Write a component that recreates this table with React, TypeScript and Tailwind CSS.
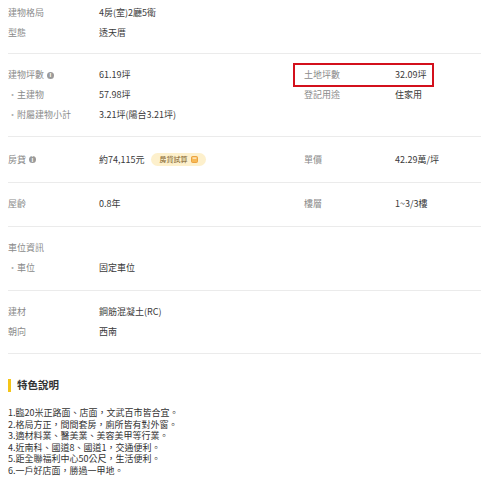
import React from 'react';

type Row = {
  label: string;
  value: React.ReactNode;
  sub?: boolean;
  info?: boolean;
  right?: { label: string; value: string; highlight?: boolean };
  tall?: boolean;
};

const InfoIcon = () => (
  <span className="ml-[3px] inline-flex h-[7px] w-[7px] items-center justify-center rounded-full bg-[#9a9a9a] text-[6px] font-bold leading-none text-white">
    i
  </span>
);

const LoanBadge = () => (
  <span className="ml-[7px] inline-flex h-[13px] items-center gap-[4px] rounded-full bg-[#fdf0cc] px-[8px] text-[7px] leading-none text-[#7a5a1e]">
    房貸試算
    <svg width="7" height="7" viewBox="0 0 7 7">
      <rect x="0.5" y="0.5" width="6" height="6" rx="1" fill="#f7b955" stroke="#e9952b" strokeWidth="0.8" />
      <rect x="1.6" y="1.5" width="3.8" height="1.2" fill="#fff3d9" />
    </svg>
  </span>
);

const sections: Row[][] = [
  [
    { label: '建物格局', value: '4房(室)2廳5衛' },
    { label: '型態', value: '透天厝' },
  ],
  [
    {
      label: '建物坪數',
      info: true,
      value: '61.19坪',
      right: { label: '土地坪數', value: '32.09坪', highlight: true },
    },
    { label: '主建物', sub: true, value: '57.98坪', right: { label: '登記用途', value: '住家用' } },
    { label: '附屬建物小計', sub: true, value: '3.21坪(陽台3.21坪)' },
  ],
  [
    {
      label: '房貸',
      info: true,
      tall: true,
      value: (
        <span className="flex items-center">
          約74,115元
          <LoanBadge />
        </span>
      ),
      right: { label: '單價', value: '42.29萬/坪' },
    },
  ],
  [{ label: '屋齡', value: '0.8年', right: { label: '樓層', value: '1~3/3樓' } }],
  [
    { label: '車位資訊', value: '' },
    { label: '車位', sub: true, value: '固定車位' },
  ],
  [
    { label: '建材', value: '鋼筋混凝土(RC)' },
    { label: '朝向', value: '西南' },
  ],
];

const sectionPad = ['pt-[3px] pb-[10px]', 'py-[11px]', 'py-[11px]', 'pt-[11px] pb-[12px]', 'pt-[11px] pb-[12px]', 'py-[11px]'];

const features = [
  '1.臨20米正路面、店面，文武百市皆合宜。',
  '2.格局方正，間間套房，廁所皆有對外窗。',
  '3.適材料業、醫美業、美容美甲等行業。',
  '4.近南科、國道8、國道1，交通便利。',
  '5.距全聯福利中心50公尺，生活便利。',
  '6.一戶好店面，勝過一甲地。',
];

const App = () => {
  return (
    <div className="min-h-screen bg-white pl-[8px] font-['Noto_Sans_CJK_TC','Noto_Sans',sans-serif] text-[9px] text-[#3a3a3a]">
      {sections.map((rows, i) => (
        <div key={i} className={`border-b border-[#ebebeb] ${sectionPad[i]}`}>
          {rows.map((row, j) => (
            <div key={j} className={`flex items-center whitespace-nowrap ${row.tall ? 'h-[23px]' : 'h-5'}`}>
              <div className="flex w-[91px] shrink-0 items-center text-[#8a8a8a]">
                {row.sub && <span className="w-[9px] text-[#b0b0b0]">・</span>}
                {row.label}
                {row.info && <InfoIcon />}
              </div>
              <div className="w-[196px] shrink-0">{row.value}</div>
              {row.right && (
                <div
                  className={`flex h-5 w-[137px] shrink-0 items-center pl-[9px] ${
                    row.right.highlight ? 'outline-2 outline-[#d3101c]' : ''
                  }`}
                >
                  <div className="w-[91px] shrink-0 text-[#8a8a8a]">{row.right.label}</div>
                  <div>{row.right.value}</div>
                </div>
              )}
            </div>
          ))}
        </div>
      ))}

      <div className="mt-[24px] flex h-[14px] items-center">
        <span className="mr-[6px] h-[13px] w-[3px] bg-[#f5c518]" />
        <span className="text-[10.5px] font-bold text-[#333]">特色說明</span>
      </div>

      <div className="mt-[15px] text-[9px] leading-[11.6px] text-[#333]">
        {features.map(line => (
          <div key={line}>{line}</div>
        ))}
      </div>
    </div>
  );
};

export default App;
